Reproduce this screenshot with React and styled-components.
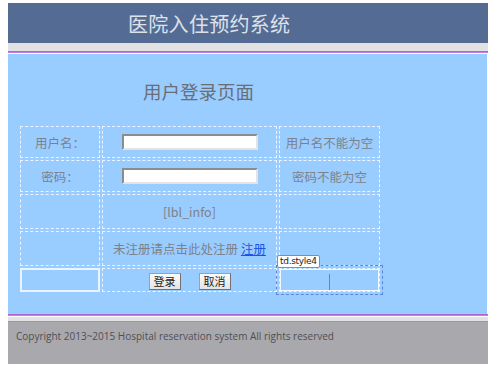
import styled, { createGlobalStyle } from 'styled-components';

const GlobalStyle = createGlobalStyle`
    body {
        margin: 3px 1px 0 8px;
        background: #ffffff;
        font-family: "Noto Sans CJK SC", "Noto Sans", sans-serif;
    }
`;

export default function App() {
    return (
        <>
            <GlobalStyle />
            <Header>
                <SiteTitle>医院入住预约系统</SiteTitle>
            </Header>
            <Band />
            <Rule />
            <Main>
                <PageTitle>用户登录页面</PageTitle>
                <LoginTable>
                    <tbody>
                        <Row h={32}>
                            <Cell w={78}>用户名：</Cell>
                            <Cell w={173}><TextBox /></Cell>
                            <Cell w={99}>用户名不能为空</Cell>
                        </Row>
                        <Row h={32}>
                            <Cell>密码：</Cell>
                            <Cell><TextBox type="password" /></Cell>
                            <Cell>密码不能为空</Cell>
                        </Row>
                        <Row h={35}>
                            <Cell></Cell>
                            <Cell>[lbl_info]</Cell>
                            <Cell></Cell>
                        </Row>
                        <Row h={35}>
                            <Cell></Cell>
                            <Cell>未注册请点击此处注册 <Link href="#">注册</Link></Cell>
                            <Cell></Cell>
                        </Row>
                        <Row h={24}>
                            <Cell thick></Cell>
                            <Cell>
                                <Button>登录</Button>
                                <Button>取消</Button>
                            </Cell>
                            <Cell selected>
                                <Tag>td.style4</Tag>
                                <Caret />
                            </Cell>
                        </Row>
                    </tbody>
                </LoginTable>
            </Main>
            <Rule />
            <Band short />
            <Footer>Copyright 2013~2015 Hospital reservation system All rights reserved</Footer>
        </>
    );
}

const Header = styled.div`
    height: 40px;
    background: #546c94;
    display: flex;
    align-items: center;
`;

const SiteTitle = styled.h1`
    margin: 0 0 0 120px;
    font-size: 20px;
    font-weight: normal;
    color: #dde1ea;
    letter-spacing: 0.3px;
`;

const Band = styled.div`
    height: ${(p) => (p.short ? '4px' : '8px')};
    background: #e2e2e2;
    border-bottom: ${(p) => (p.short ? '1px solid #9a9a9e' : 'none')};
`;

const Rule = styled.div`
    height: 1px;
    background: #c27ee8;
    border-top: 1px solid #a866d8;
    border-bottom: 1px solid #ffffff;
`;

const Main = styled.div`
    height: 260px;
    background: #99ccff;
    border-right: 1px solid #ffffff;
    padding: 0 0 0 12px;
    box-sizing: border-box;
`;

const PageTitle = styled.div`
    padding: 24px 0 0 123px;
    height: 46px;
    font-size: 18.5px;
    color: #6a6e77;
`;

const LoginTable = styled.table`
    border-collapse: separate;
    border-spacing: 2px;
    margin-left: -2px;
    font-size: 12.5px;
    color: #7d828a;
`;

const Row = styled.tr`
    height: ${(p) => p.h}px;
`;

const Cell = styled.td`
    position: relative;
    width: ${(p) => (p.w ? p.w + 'px' : 'auto')};
    padding: 0;
    text-align: center;
    border: ${(p) => (p.thick ? '2px solid #eaf3ff' : '1px dashed #eef4ff')};
    outline: ${(p) => (p.selected ? '1px dashed #5c86d6' : 'none')};
    outline-offset: 2px;
    box-shadow: ${(p) => (p.selected ? 'inset 0 0 0 1px #f4f8ff' : 'none')};
`;

const TextBox = styled.input`
    width: 128px;
    height: 10px;
    margin-left: 19px;
    display: block;
    border: 2px solid #f0f0f0;
    border-top-color: #8c8c8c;
    border-left-color: #8c8c8c;
    border-right-color: #e4e4e4;
    border-bottom-color: #e4e4e4;
    background: #ffffff;
    padding: 1px 2px;
`;

const Link = styled.a`
    color: #1a55e8;
    text-decoration: underline;
`;

const Button = styled.button`
    font-family: "Noto Sans CJK SC", sans-serif;
    font-size: 11px;
    height: 17px;
    width: 32px;
    padding: 0;
    margin: 0 9px;
    line-height: 13px;
    color: #222;
    background: linear-gradient(#fbfbfb, #e4e4e4);
    border: 1px solid #a0a0a0;
    border-right-color: #707070;
    border-bottom-color: #707070;
`;

const Tag = styled.span`
    position: absolute;
    left: -3px;
    top: -14px;
    padding: 0 2px;
    font-family: "DejaVu Sans", sans-serif;
    font-size: 9px;
    line-height: 11px;
    letter-spacing: -0.3px;
    color: #222;
    background: #ffffff;
    border: 1px solid #6d8fd8;
    border-radius: 2px;
`;

const Caret = styled.span`
    display: inline-block;
    width: 1px;
    height: 16px;
    vertical-align: middle;
    background: #4f9a8e;
`;

const Footer = styled.div`
    height: 42px;
    background: #a9a9ad;
    padding: 7px 0 0 8px;
    box-sizing: border-box;
    font-family: "Open Sans", sans-serif;
    font-size: 10px;
    color: #4f4f55;
`;
